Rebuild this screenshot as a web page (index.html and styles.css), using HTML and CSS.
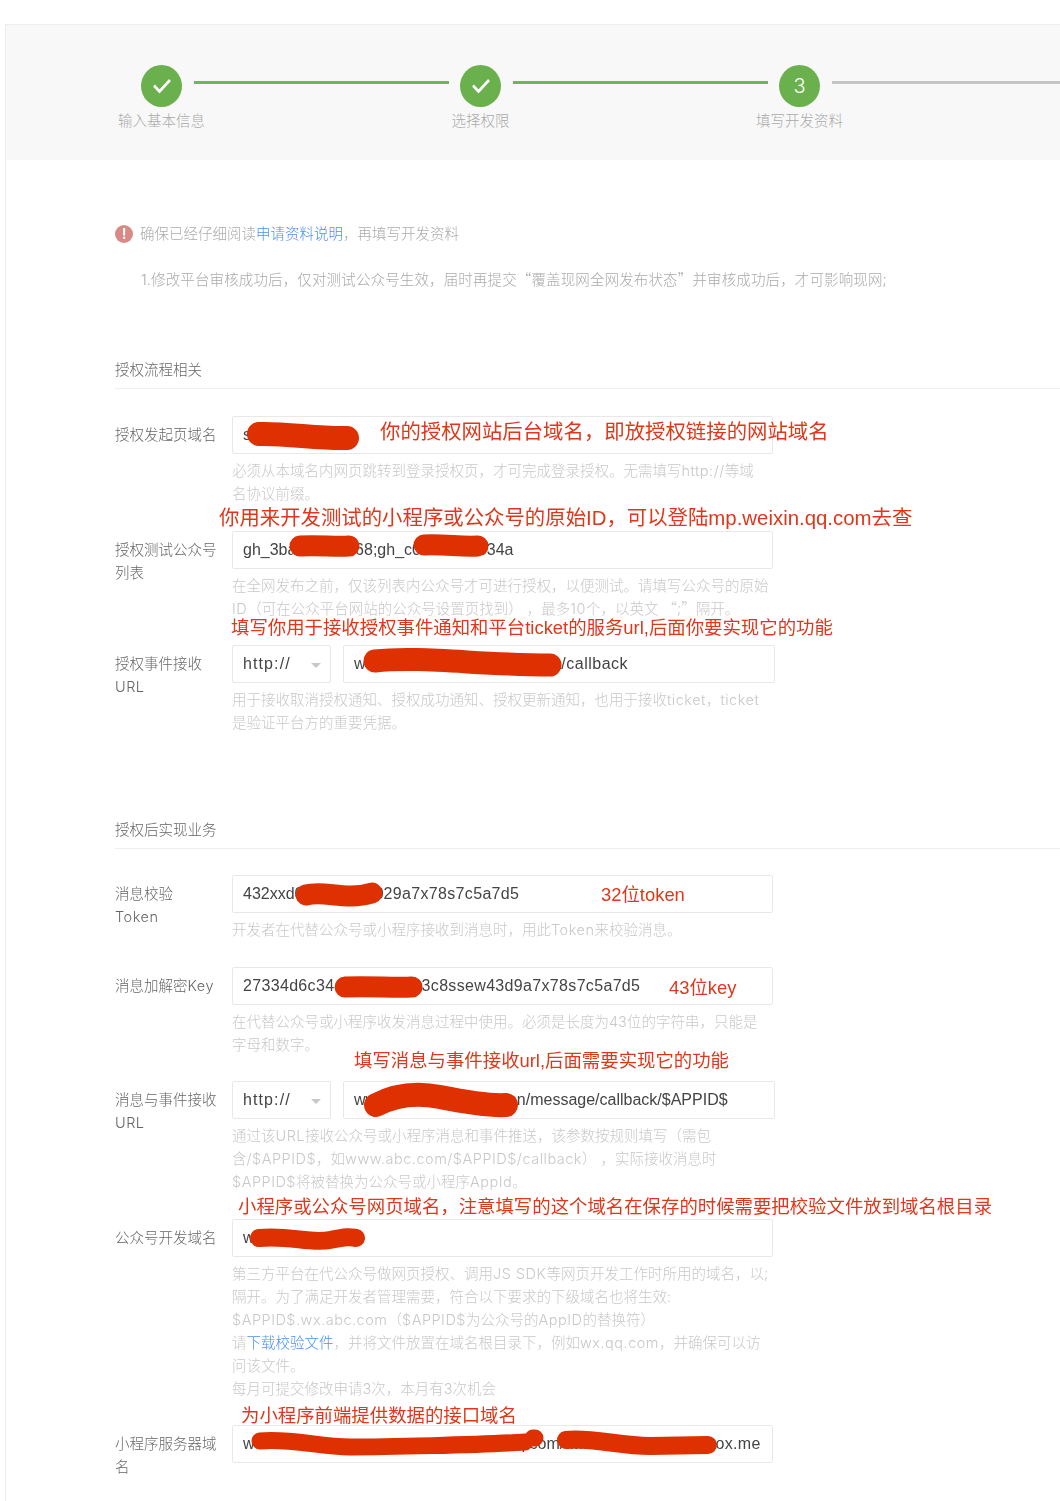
FILE: index.html
```html
<!DOCTYPE html>
<html lang="zh-CN">
<head>
  <meta charset="UTF-8" />
  <title>填写开发资料</title>
  <link rel="stylesheet" href="styles.css">
</head>
<body>
  <div class="panel">
    <div class="steps">
      <div class="step">
        <div class="step-dot">
          <svg width="20" height="16" viewBox="0 0 20 16"><path d="M2 7.5 L7.5 13.5 L18 2" fill="none" stroke="#fff" stroke-width="2.6"/></svg>
        </div>
        <div class="step-name">输入基本信息</div>
      </div>
      <div class="step-line"></div>
      <div class="step">
        <div class="step-dot">
          <svg width="20" height="16" viewBox="0 0 20 16"><path d="M2 7.5 L7.5 13.5 L18 2" fill="none" stroke="#fff" stroke-width="2.6"/></svg>
        </div>
        <div class="step-name">选择权限</div>
      </div>
      <div class="step-line"></div>
      <div class="step">
        <div class="step-dot">3</div>
        <div class="step-name">填写开发资料</div>
      </div>
      <div class="step-line todo"></div>
    </div>

    <div class="content">
      <div class="notice">
        <div class="notice-head">
          <span class="notice-icon">!</span>
          <span>确保已经仔细阅读<a class="link">申请资料说明</a>，再填写开发资料</span>
        </div>
        <div class="notice-item">1.修改平台审核成功后，仅对测试公众号生效，届时再提交<span class="cjk">“</span>覆盖现网全网发布状态<span class="cjk">”</span>并审核成功后，才可影响现网;</div>
      </div>

      <div class="section-title">授权流程相关</div>

      <div class="row">
        <div class="row-label">授权发起页域名</div>
        <div class="row-body">
          <div class="input">s</div>
          <div class="hint">必须从本域名内网页跳转到登录授权页，才可完成登录授权。无需填写<span class="en">http://</span>等域<br>名协议前缀。</div>
        </div>
      </div>

      <div class="row">
        <div class="row-label">授权测试公众号列表</div>
        <div class="row-body">
          <div class="input">gh_3ba00000r068;gh_c0000000i034a</div>
          <div class="hint">在全网发布之前，仅该列表内公众号才可进行授权，以便测试。请填写公众号的原始<br><span class="en">ID</span>（可在公众平台网站的公众号设置页找到） ，最多<span class="en">10</span>个，以英文 <span class="cjk">“</span>;<span class="cjk">”</span>隔开。</div>
        </div>
      </div>

      <div class="row">
        <div class="row-label">授权事件接收<br><span class="en">URL</span></div>
        <div class="row-body">
          <div class="url-group">
            <div class="select"><span class="scheme">http://</span><i class="caret"></i></div>
            <div class="input url-input">www.aaaaaaaaaaaaaaaaaaa<span class="path">/callback</span></div>
          </div>
          <div class="hint">用于接收取消授权通知、授权成功通知、授权更新通知，也用于接收<span class="en">ticket</span>，<span class="en">ticket</span><br>是验证平台方的重要凭据。</div>
        </div>
      </div>

      <div class="section-title second">授权后实现业务</div>

      <div class="row">
        <div class="row-label">消息校验<br><span class="en">Token</span></div>
        <div class="row-body">
          <div class="input">432xxd0000000000<span class="token">29a7x78s7c5a7d5</span></div>
          <div class="hint">开发者在代替公众号或小程序接收到消息时，用此<span class="en">Token</span>来校验消息。</div>
        </div>
      </div>

      <div class="row">
        <div class="row-label">消息加解密<span class="en">Key</span></div>
        <div class="row-body">
          <div class="input"><span class="token">27334d6c34</span>&nbsp;w00000000<span class="token">3c8ssew43d9a7x78s7c5a7d5</span></div>
          <div class="hint">在代替公众号或小程序收发消息过程中使用。必须是长度为43位的字符串，只能是<br>字母和数字。</div>
        </div>
      </div>

      <div class="row">
        <div class="row-label">消息与事件接收<br><span class="en">URL</span></div>
        <div class="row-body">
          <div class="url-group">
            <div class="select"><span class="scheme">http://</span><i class="caret"></i></div>
            <div class="input url-input">www.aaaaaaaaaaaaaan/message/callback/$APPID$</div>
          </div>
          <div class="hint">通过该<span class="en">URL</span>接收公众号或小程序消息和事件推送，该参数按规则填写（需包<br>含<span class="en">/$APPID$</span>，如<span class="en">www.abc.com/$APPID$/callback</span>） ，实际接收消息时<br><span class="en">$APPID$</span>将被替换为公众号或小程序<span class="en">AppId</span>。</div>
        </div>
      </div>

      <div class="row">
        <div class="row-label">公众号开发域名</div>
        <div class="row-body">
          <div class="input">w</div>
          <div class="hint">第三方平台在代公众号做网页授权、调用<span class="en">JS SDK</span>等网页开发工作时所用的域名，以;<br>隔开。为了满足开发者管理需要，符合以下要求的下级域名也将生效:<br><span class="en">$APPID$.wx.abc.com</span>（<span class="en">$APPID$</span>为公众号的<span class="en">AppID</span>的替换符）<br>请<a class="link">下载校验文件</a>，并将文件放置在域名根目录下，例如<span class="en">wx.qq.com</span>，并确保可以访<br>问该文件。<br>每月可提交修改申请3次，本月有3次机会</div>
        </div>
      </div>

      <div class="row">
        <div class="row-label">小程序服务器域名</div>
        <div class="row-body">
          <div class="input">www.aaaaaaaaaaaaaaaaaaaaaaaaaaiq.com/aaaaaaaaaaaaaaaaa<span class="token">ox.me</span></div>
        </div>
      </div>
    </div>
  </div>

  <!-- 红色涂抹和批注 -->
  <div class="marks">
    <svg class="scribbles" width="1060" height="1501" viewBox="0 0 1060 1501">
      <g fill="none" stroke="#de3000" stroke-linecap="round" stroke-linejoin="round">
        <path stroke-width="24" d="M259 434 C285 433 320 439 347 438"/>
        <path stroke-width="21" d="M300 546 C320 545 335 547 349 546"/>
        <path stroke-width="21" d="M424 545 C445 544 460 547 478 546"/>
        <path stroke-width="23" d="M375 661 C420 656 480 665 550 665"/>
        <path stroke-width="21" d="M306 895 C325 890 345 901 372 893"/>
        <path stroke-width="21" d="M345 987 C370 986 395 988 412 987"/>
        <path stroke-width="24" d="M376 1105 C395 1095 415 1092 440 1097 S490 1106 506 1105"/>
        <path stroke-width="18" d="M259 1238 C290 1235 310 1244 330 1240 S350 1237 356 1238"/>
        <path stroke-width="17" d="M260 1441 C290 1438 320 1447 350 1447 S480 1445 525 1442"/>
        <path stroke-width="17" d="M533 1438 L535 1438"/>
        <path stroke-width="18" d="M566 1440 C590 1437 620 1446 650 1446 L708 1445"/>
      </g>
    </svg>
    <span class="note note-1">你的授权网站后台域名，即放授权链接的网站域名</span>
    <span class="note note-2">你用来开发测试的小程序或公众号的原始ID，可以登陆mp.weixin.qq.com去查</span>
    <span class="note note-3">填写你用于接收授权事件通知和平台ticket的服务url,后面你要实现它的功能</span>
    <span class="note note-4">32位token</span>
    <span class="note note-5">43位key</span>
    <span class="note note-6">填写消息与事件接收url,后面需要实现它的功能</span>
    <span class="note note-7">小程序或公众号网页域名，注意填写的这个域名在保存的时候需要把校验文件放到域名根目录</span>
    <span class="note note-8">为小程序前端提供数据的接口域名</span>
  </div>
</body>
</html>
```

FILE: styles.css
```css
html, body {
  margin: 0;
  padding: 0;
  height: 100%;
  overflow: hidden;
}

body {
  position: relative;
  background: #fff;
  font-family: Inter, "Noto Sans CJK SC", sans-serif;
  font-size: 14.5px;
  font-weight: 300;
  line-height: 23px;
  color: #666;
}

.panel {
  min-height: 1477px;
  margin: 24px 0 0 5px;
  border-top: 1px solid #eee;
  border-left: 1px solid #eee;
  filter: blur(0.35px);
}

.link {
  color: #4a8ff0;
}

.cjk {
  font-family: "Noto Sans CJK SC", sans-serif;
  line-height: 0;
}

.en {
  letter-spacing: 0.5px;
}

/* 步骤条 */
.steps {
  display: flex;
  height: 135px;
  padding: 40px 0 0 135px;
  box-sizing: border-box;
  background: #f8f8f8;
  overflow: hidden;
}

.step {
  display: flex;
  flex-direction: column;
  align-items: center;
  flex: none;
  width: 41px;
}

.step-dot {
  display: flex;
  align-items: center;
  justify-content: center;
  flex: none;
  width: 41px;
  height: 42px;
  border-radius: 50%;
  background: #6ab04c;
  color: #fff;
  font-size: 20px;
}

.step-name {
  margin-top: 2px;
  white-space: nowrap;
  color: #aaa;
}

.step-line {
  flex: none;
  width: 255px;
  height: 3px;
  margin: 16px 11px 0 12px;
  background: #6ab85a;
}

.step-line.todo {
  background: #c4c4c4;
}

/* 正文 */
.content {
  padding: 62px 0 0 109px;
}

.notice {
  margin-bottom: 67px;
  color: #aaa;
}

.notice-head {
  display: flex;
  align-items: center;
  gap: 7px;
}

.notice-icon {
  display: flex;
  align-items: center;
  justify-content: center;
  width: 18px;
  height: 18px;
  border-radius: 50%;
  background: #d98a84;
  color: #fff;
  font-size: 14px;
  font-weight: 700;
}

.notice-item {
  margin: 23px 0 0 26px;
  letter-spacing: 0.13px;
  white-space: nowrap;
}

.section-title {
  padding-bottom: 7px;
  margin-bottom: 27px;
  border-bottom: 1px solid #eee;
}

.section-title.second {
  margin-top: 84px;
  margin-bottom: 26px;
}

.row {
  display: flex;
  margin-bottom: 25.5px;
}

.row-label {
  flex: none;
  width: 102px;
  margin-right: 15px;
  padding-top: 7px;
}

.row-body {
  flex: none;
  width: 543px;
}

.input, .select {
  height: 38px;
  padding: 0 10px;
  box-sizing: border-box;
  border: 1px solid #e8e8e8;
  border-radius: 2px;
  background: #fff;
  color: #444;
  font-family: "Liberation Sans", "Noto Sans CJK SC", sans-serif;
  font-size: 16px;
  font-weight: 400;
  line-height: 35px;
  white-space: nowrap;
  overflow: hidden;
}

.row-body > .input {
  width: 541px;
}

.scheme {
  letter-spacing: 1.1px;
}

.path {
  letter-spacing: 0.5px;
}

.token {
  letter-spacing: 0.33px;
}

.url-group {
  display: flex;
  gap: 12px;
}

.select {
  position: relative;
  flex: none;
  width: 99px;
}

.caret {
  position: absolute;
  right: 9px;
  top: 17px;
  border-left: 5px solid transparent;
  border-right: 5px solid transparent;
  border-top: 5px solid #c8c8c8;
}

.url-input {
  flex: none;
  width: 432px;
}

.hint {
  margin-top: 5px;
  color: #c8c8c8;
  white-space: nowrap;
}

/* 批注层 */
.marks {
  position: absolute;
  top: 0;
  left: 0;
  width: 1060px;
  height: 1501px;
  overflow: hidden;
  pointer-events: none;
}

.scribbles {
  position: absolute;
  top: 0;
  left: 0;
}

.note {
  position: absolute;
  color: #e0371c;
  font-family: "Liberation Sans", "Noto Sans CJK SC", sans-serif;
  font-size: 18.4px;
  font-weight: 400;
  line-height: 24px;
  white-space: nowrap;
  filter: blur(0.3px);
}

.note-1 { left: 380px; top: 420px; font-size: 20.4px; }
.note-2 { left: 219px; top: 506px; font-size: 20.4px; }
.note-3 { left: 231px; top: 616px; }
.note-4 { left: 601px; top: 883px; }
.note-5 { left: 669px; top: 976px; }
.note-6 { left: 354px; top: 1049px; }
.note-7 { left: 238px; top: 1195px; }
.note-8 { left: 241px; top: 1404px; }
```
